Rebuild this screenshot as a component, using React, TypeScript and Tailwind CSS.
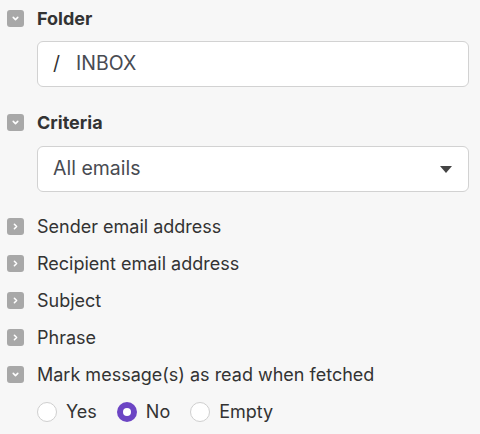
import React from "react";

function Toggle({ open }: { open: boolean }) {
  return (
    <div className="w-[17px] h-[17px] rounded-[3px] bg-[#a8a8a8] flex items-center justify-center shrink-0">
      {open ? (
        <svg width="9" height="9" viewBox="0 0 10 10">
          <path d="M2.5 3.8 L5 6.2 L7.5 3.8" fill="none" stroke="#fff" strokeWidth="1.8" strokeLinecap="round" strokeLinejoin="round" />
        </svg>
      ) : (
        <svg width="9" height="9" viewBox="0 0 10 10">
          <path d="M3.8 2.5 L6.2 5 L3.8 7.5" fill="none" stroke="#fff" strokeWidth="1.8" strokeLinecap="round" strokeLinejoin="round" />
        </svg>
      )}
    </div>
  );
}

function Header({ open, label, bold }: { open: boolean; label: string; bold?: boolean }) {
  return (
    <div className="flex items-center h-[37px] pl-[7px]">
      <Toggle open={open} />
      <span className={`ml-[13px] text-[18px] text-[#333] ${bold ? "font-bold" : ""}`}>{label}</span>
    </div>
  );
}

function Radio({ checked, label }: { checked?: boolean; label: string }) {
  return (
    <div className="flex items-center">
      {checked ? (
        <div className="w-[20px] h-[20px] rounded-full bg-[#6c45c4] flex items-center justify-center">
          <div className="w-[8px] h-[8px] rounded-full bg-white" />
        </div>
      ) : (
        <div className="w-[20px] h-[20px] rounded-full bg-white border border-[#cfcfcf]" />
      )}
      <span className="ml-[9px] text-[18px] text-[#333]">{label}</span>
    </div>
  );
}

export default function App() {
  return (
    <div className="w-[480px] h-[434px] bg-[#f7f7f7] overflow-hidden" style={{ fontFamily: "Inter, sans-serif" }}>
      <div className="pt-0">
        <Header open label="Folder" bold />
        <div className="pl-[37px] pr-[11px] mt-[4px]">
          <div className="h-[46px] bg-white border border-[#d2d2d2] rounded-[6px] flex items-center px-[15px] text-[19.5px] text-[#484b52]">
            <span className="text-[#333]">/</span>
            <span className="ml-[16px]">INBOX</span>
          </div>
        </div>
        <div className="mt-[17px]">
          <Header open label="Criteria" bold />
        </div>
        <div className="pl-[37px] pr-[11px] mt-[5px]">
          <div className="h-[46px] bg-white border border-[#d2d2d2] rounded-[6px] flex items-center justify-between pl-[15px] pr-[16px] text-[19.5px] text-[#484b52]">
            <span>All emails</span>
            <svg width="12" height="7" viewBox="0 0 12 7">
              <path d="M0 0 L12 0 L6 7 Z" fill="#444" />
            </svg>
          </div>
        </div>
        <div className="mt-[16px]">
          <Header open={false} label="Sender email address" />
          <Header open={false} label="Recipient email address" />
          <Header open={false} label="Subject" />
          <Header open={false} label="Phrase" />
          <Header open label="Mark message(s) as read when fetched" />
        </div>
        <div className="flex items-center gap-[20px] pl-[37px] h-[37px]">
          <Radio label="Yes" />
          <Radio checked label="No" />
          <Radio label="Empty" />
        </div>
      </div>
    </div>
  );
}
